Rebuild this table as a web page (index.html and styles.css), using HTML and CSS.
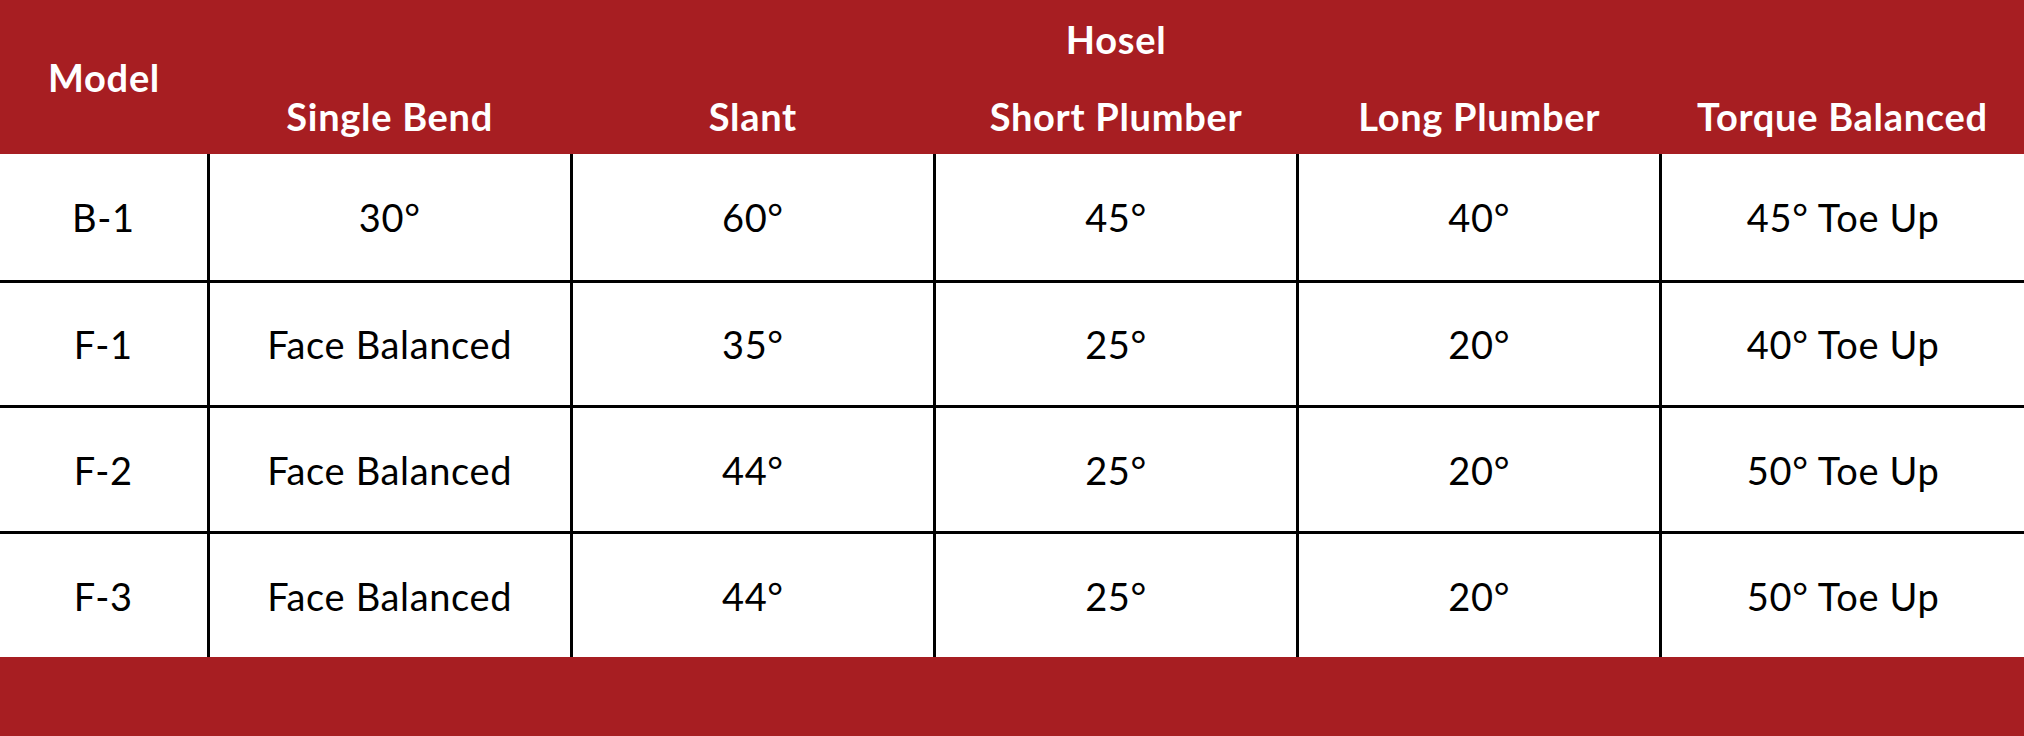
FILE: index.html
```html
<!DOCTYPE html>
<html>
<head>
<meta charset="utf-8">
<link rel="stylesheet" href="styles.css">
</head>
<body>
<div class="sheet">
  <table class="spec">
    <colgroup>
      <col class="c-model">
      <col class="c-val">
      <col class="c-val">
      <col class="c-val">
      <col class="c-val">
      <col class="c-val">
    </colgroup>
    <thead>
      <tr class="h1">
        <th rowspan="2" class="model-h">Model</th>
        <th colspan="5">Hosel</th>
      </tr>
      <tr class="h2">
        <th>Single Bend</th>
        <th>Slant</th>
        <th>Short Plumber</th>
        <th>Long Plumber</th>
        <th>Torque Balanced</th>
      </tr>
    </thead>
    <tbody>
      <tr class="r1">
        <td>B-1</td><td>30°</td><td>60°</td><td>45°</td><td>40°</td><td>45° Toe Up</td>
      </tr>
      <tr class="r2">
        <td>F-1</td><td>Face Balanced</td><td>35°</td><td>25°</td><td>20°</td><td>40° Toe Up</td>
      </tr>
      <tr class="r3">
        <td>F-2</td><td>Face Balanced</td><td>44°</td><td>25°</td><td>20°</td><td>50° Toe Up</td>
      </tr>
      <tr class="r4">
        <td>F-3</td><td>Face Balanced</td><td>44°</td><td>25°</td><td>20°</td><td>50° Toe Up</td>
      </tr>
    </tbody>
  </table>
  <div class="footer-band"></div>
</div>
</body>
</html>
```

FILE: styles.css
```css
html, body {
  margin: 0;
  padding: 0;
  background: #ffffff;
}

.sheet {
  width: 2024px;
  height: 736px;
  display: flex;
  flex-direction: column;
  font-family: "Lato", "Open Sans", sans-serif;
}

.spec {
  width: 2024px;
  border-collapse: collapse;
  table-layout: fixed;
}

.c-model { width: 208px; }
.c-val { width: 363px; }

.spec th {
  background: #a71e22;
  color: #ffffff;
  font-weight: 700;
  font-size: 38px;
  letter-spacing: 0.7px;
  padding: 0;
  text-align: center;
  vertical-align: middle;
  border: none;
}

.h1 { height: 77px; }
.h2 { height: 77px; }

.model-h {
  padding-bottom: 4px;
}

.spec td {
  font-size: 38px;
  letter-spacing: 0.65px;
  color: #000000;
  text-align: center;
  vertical-align: middle;
  padding: 0;
  border: 3px solid #000000;
}

.r1 td { height: 126px; }
.r2 td { height: 122px; }
.r3 td { height: 123px; }
.r4 td { height: 123px; }

.spec tbody tr:first-child td { border-top: none; }
.spec tbody tr:last-child td { border-bottom: none; }
.spec td:first-child { border-left: none; }
.spec td:last-child { border-right: none; }

.footer-band {
  flex: 1;
  background: #a71e22;
}
```
